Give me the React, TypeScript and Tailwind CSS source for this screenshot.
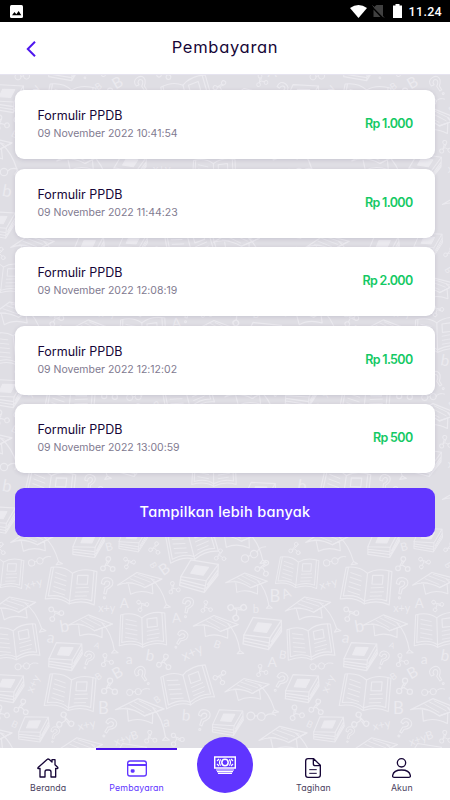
import React from 'react';

type Payment = {
  title: string;
  date: string;
  amount: string;
};

const payments: Payment[] = [
  { title: 'Formulir PPDB', date: '09 November 2022 10:41:54', amount: 'Rp 1.000' },
  { title: 'Formulir PPDB', date: '09 November 2022 11:44:23', amount: 'Rp 1.000' },
  { title: 'Formulir PPDB', date: '09 November 2022 12:08:19', amount: 'Rp 2.000' },
  { title: 'Formulir PPDB', date: '09 November 2022 12:12:02', amount: 'Rp 1.500' },
  { title: 'Formulir PPDB', date: '09 November 2022 13:00:59', amount: 'Rp 500' },
];

// Doodle positions inside one 885x885 tile: x, y, rotation, scale
type Spot = [number, number, number, number];

const openBooks: Spot[] = [
  [215, 168, 7, 1], [428, 300, -1, 0.96], [572, 35, -14, 1], [560, 472, -14, 1],
  [212, 488, 7, 1], [8, 128, 7, 0.84], [45, 338, -6, 0.95], [150, 760, 9, 1], [642, 705, 0, 0.9],
];
const caps: Spot[] = [
  [98, 30, -3, 0.95], [420, 158, -3, 0.97], [40, 232, -6, 1], [271, 286, 3, 0.97],
  [648, 288, 3, 0.97], [420, 540, 4, 1.05], [740, 158, 3, 0.9], [742, 476, -5, 0.97],
  [240, 655, -3, 1], [850, 622, -4, 1.05], [710, 18, 0, 1], [505, 790, 0, 0.9],
];
const closedBooks: Spot[] = [
  [266, 43, -2, 0.95], [400, 30, 0, 0.85], [598, 139, 6, 1.1], [197, 380, 0, 1], [22, 476, 0, 1],
  [102, 598, -2, 0.92], [788, 311, 3, 1.12], [684, 578, 0, 0.92], [390, 683, 6, 0.95],
  [780, 782, 0, 0.95], [0, 855, 0, 0.95],
];
const questions: Spot[] = [
  [320, 172, 5, 1], [563, 230, 5, 0.95], [543, 327, 25, 0.9], [265, 388, 15, 0.85], [428, 435, -40, 0.95],
  [610, 568, 12, 1], [328, 592, 25, 0.95], [164, 612, 10, 0.75], [842, 455, 25, 0.95], [270, 745, 0, 0.9],
];
const glasses: Spot[] = [
  [118, 92, -8, 0.85], [78, 407, 0, 0.85], [413, 484, 0, 0.85], [760, 72, -20, 1], [782, 558, 8, 1.05], [10, 695, 0, 1],
];
const molecules: Spot[] = [
  [323, 103, 0, 1], [388, 97, 80, 0.8], [465, 53, 15, 0.8], [520, 173, -20, 0.8], [428, 225, 75, 0.8],
  [618, 230, -10, 0.8], [168, 250, 80, 1], [318, 390, -20, 0.85], [493, 395, 10, 1], [328, 470, 0, 1.1],
  [65, 530, 10, 1], [198, 573, 110, 1.1], [450, 621, -10, 0.85], [532, 628, 85, 0.9], [2, 548, -20, 1],
  [662, 440, 30, 0.9], [790, 112, 25, 1], [713, 240, 60, 1.2], [0, 55, 10, 0.8], [783, 421, -20, 0.8],
  [660, 75, 0, 0.8], [300, 775, 0, 0.9], [560, 835, 60, 1],
];
const letters: [string, number, number, number, number][] = [
  ['x+y', 103, 172, -15, 34], ['x+y', 320, 246, 0, 32], ['x+y', 582, 380, -25, 42], ['x+y', 262, 596, -12, 34],
  ['x+y', 110, 466, -65, 34], ['x+yB', 382, 636, -20, 34], ['A', 373, 233, 0, 40], ['A', 530, 277, -5, 40],
  ['A', 288, 354, 20, 24], ['A', 863, 203, -20, 40], ['B', 825, 215, 0, 50], ['A', 817, 410, 0, 42],
  ['B', 846, 386, 10, 34], ['B', 502, 130, -35, 46], ['B', 360, 442, -30, 46], ['B', 310, 552, 0, 50],
  ['B', 301, 447, -35, 28], ['B', 452, 110, 60, 26], ['B', 477, 517, -35, 28], ['B', 648, 354, 20, 32],
  ['B', 40, 592, 25, 28], ['B', 330, 62, -15, 34], ['a', 150, 338, 10, 46], ['b', 196, 305, -10, 50],
  ['a', 388, 402, 0, 42], ['b', 448, 392, 10, 46], ['a', 500, 590, -5, 42], ['b', 557, 572, 5, 46],
  ['b', 768, 248, 0, 34], ['b', 18, 770, 10, 50], ['x+y', 485, 700, 0, 34],
];

const place = ([x, y, r, s]: Spot) => `translate(${x} ${y}) rotate(${r}) scale(${s})`;

const SchoolDoodles: React.FC = () => (
  <svg className="absolute inset-0 h-full w-full" fill="none" aria-hidden="true">
    <defs>
      <g id="open-book">
        <path d="M-68-48-74 48Q-30 36-1 54Q38 36 74 48L70-52Q26-60-2-38Q-30-58-68-48Z" />
        <path d="M-2-38-1 54M-61-49-66 38Q-26 28-1 46Q34 29 65 37L61-53" />
        <path d="M-52-34-20-27M-52-20-18-13M-53-6-18 1M-53 8-18 15M-54 22-18 29M14 4 50-2M14 17 52 11M14 29 48 24" strokeWidth="2.6" />
        <path d="M14-34 45-38 46-11 15-8Z" />
      </g>
      <g id="cap">
        <path d="M-70 4-8-32 68-8 14 16Q-28-10-70 4Z" />
        <path d="M-36 3-31 34Q0 20 38 36L37 7M14 16 68-8" />
        <path d="M-42-3-22 0M-30-14 12 6M-18-22 32 0M-4-26 46-6" strokeWidth="2.4" />
        <path d="M36-9Q66 18 78 72L70 82 90 80 78 72" />
      </g>
      <g id="closed-book">
        <path d="M-28-42 48-38 20 10-50 6Z" />
        <path d="M-50 6-51 30 18 42 20 10M18 42 50-8 48-38M-49 14 19 24M-50 22 18 33M24 20 48-22M22 30 49-14" />
        <path d="M-14-28 22-27 10-4-24-6Z" className="fill-[#ebeaef]" />
      </g>
      <g id="question">
        <path d="M-17-10Q-18-31 3-29Q22-25 16-7Q10 2 2 6L0 20-7 19-5 1Q8-4 8-13Q7-20-1-19Q-8-17-8-8Z" />
        <circle cx="-4" cy="32" r="3" />
      </g>
      <g id="glasses">
        <circle cx="-28" cy="4" r="11" />
        <circle cx="2" cy="1" r="11" />
        <path d="M-17 2-9 1M13-2Q24-14 42-8" />
      </g>
      <g id="molecule">
        <circle cx="2" cy="-16" r="7" />
        <circle cx="-14" cy="12" r="7" />
        <circle cx="15" cy="14" r="7" />
        <path d="M-1-9-9 6-1 2 9 9M5-9 0-2" />
      </g>
      <g id="tile" className="stroke-[#ebeaef]" strokeWidth="3.4" strokeLinejoin="round" strokeLinecap="round">
        {openBooks.map((s, i) => <use key={i} href="#open-book" transform={place(s)} />)}
        {caps.map((s, i) => <use key={i} href="#cap" transform={place(s)} />)}
        {closedBooks.map((s, i) => <use key={i} href="#closed-book" transform={place(s)} />)}
        {questions.map((s, i) => <use key={i} href="#question" transform={place(s)} />)}
        {glasses.map((s, i) => <use key={i} href="#glasses" transform={place(s)} />)}
        {molecules.map((s, i) => <use key={i} href="#molecule" transform={place(s)} />)}
        {letters.map(([t, x, y, r, size], i) => (
          <text
            key={i}
            transform={`translate(${x} ${y}) rotate(${r})`}
            fontSize={size}
            textAnchor="middle"
            stroke="none"
            className="fill-[#ebeaef] font-['Lato',sans-serif]"
          >
            {t}
          </text>
        ))}
      </g>
    </defs>
    {[-135, 160, 455].map((y) =>
      [-295, 0, 295].map((x) => (
        <use key={`${x}${y}`} href="#tile" transform={`translate(${x} ${y}) scale(0.33333)`} />
      ))
    )}
  </svg>
);

const StatusBar: React.FC = () => (
  <div className="flex h-[22px] shrink-0 items-center bg-black pl-2.5 pr-2">
    <svg className="h-[13px] w-[13px]" viewBox="0 0 13 13">
      <rect width="13" height="13" rx="1.5" fill="#fff" />
      <path d="M2 10.3 4.5 7l1.8 2.2L8.7 6l2.6 4.3z" fill="#000" />
    </svg>
    <svg className="ml-auto h-[13px] w-[17px]" viewBox="0 0 17 13">
      <path d="M0 3Q8.5-3 17 3L8.5 13Z" fill="#fff" />
    </svg>
    <svg className="ml-[5px] h-[14px] w-[13px]" viewBox="0 0 13 14">
      <path d="M4.5 1H11V13L1.5 3.5ZM1.5 5.5 8.5 13H1.5Z" fill="#404040" />
      <path d="M.5 1.5 12 13.5" stroke="#404040" />
    </svg>
    <svg className="ml-2 h-[14px] w-[9px]" viewBox="0 0 9 14">
      <path d="M2.5 0h4v1.5H9V14H0V1.5h2.5z" fill="#fff" />
    </svg>
    <span className="ml-[7px] mt-0.5 font-['Roboto',sans-serif] text-[12.5px] font-medium leading-none tracking-[0.3px] text-white">
      11.24
    </span>
  </div>
);

const HomeIcon = () => (
  <svg className="h-5 w-[22px]" viewBox="0 0 66 60" fill="none" stroke="currentColor" strokeWidth="4" strokeLinejoin="round" strokeLinecap="round">
    <path d="M9 31 4 32Q1 31 4 28L31 4Q33 2 36 4L45 12V5H54V20L62 28Q64 31 61 32L56 31V57H42V42Q42 36 36 36H29Q24 36 24 42V57H9Z" />
  </svg>
);

const CardIcon = () => (
  <svg className="h-[17px] w-5" viewBox="0 0 60 51" fill="none" stroke="currentColor" strokeWidth="4">
    <rect x="2" y="3" width="56" height="45" rx="7" />
    <path d="M2 15H58" strokeWidth="6" />
    <rect x="13" y="30" width="8" height="6" rx="2" fill="currentColor" />
  </svg>
);

const BillIcon = () => (
  <svg className="h-5 w-4" viewBox="0 0 48 60" fill="none" stroke="currentColor" strokeWidth="4" strokeLinejoin="round" strokeLinecap="round">
    <path d="M9 2H26L46 22V51Q46 58 39 58H9Q2 58 2 51V9Q2 2 9 2ZM25 3V17Q25 23 31 23H45" />
    <path d="M14 35H34M14 46H34" strokeWidth="3" />
  </svg>
);

const UserIcon = () => (
  <svg className="h-5 w-[19px]" viewBox="0 0 57 60" fill="none" stroke="currentColor" strokeWidth="4" strokeLinejoin="round">
    <circle cx="28.5" cy="14.5" r="12.5" />
    <path d="M2 52Q5 36 28.5 36T55 52Q56 58 50 58H7Q1 58 2 52Z" />
  </svg>
);

const MoneyIcon = () => (
  <svg className="h-[18px] w-[22px]" viewBox="0 0 66 54" fill="none" stroke="currentColor" strokeWidth="4.5">
    <rect x="2" y="3" width="62" height="33" />
    <circle cx="33" cy="19.5" r="9.5" />
    <path d="M9 15 15 9M51 9 57 15M9 24 15 30M51 30 57 24M20 10Q13 19.5 20 29M46 10Q53 19.5 46 29" strokeWidth="3.5" />
    <path d="M6 42H60M9 47H57M12 52H54" strokeWidth="3.5" />
  </svg>
);

const PaymentCard: React.FC<{ payment: Payment }> = ({ payment }) => (
  <div className="flex h-[69px] items-center justify-between rounded-[9px] bg-white px-[22.5px] shadow-[0_1px_4px_rgba(60,50,90,0.14)]">
    <div>
      <p className="text-[12.5px] leading-[18px] tracking-[-0.02px] text-[#160637]">{payment.title}</p>
      <p className="text-[10.5px] leading-[17px] tracking-[-0.01px] text-[#817a90]">{payment.date}</p>
    </div>
    <p className="text-[12.5px] font-semibold tracking-[-0.66px] text-[#14c964]">{payment.amount}</p>
  </div>
);

const NavItem: React.FC<{ label: string; active?: boolean; children: React.ReactNode }> = ({ label, active, children }) => (
  <button className={`flex flex-1 flex-col items-center ${active ? 'text-[#6035ff]' : 'text-[#160637]'}`}>
    <span className={`h-[2px] w-[81px] ${active ? 'bg-[#4a12e8]' : ''}`} />
    <span className="mt-2 flex h-5 items-center">{children}</span>
    <span className={`mt-[3px] text-[8.8px] leading-[13px] tracking-[0.14px] ${active ? '' : 'text-[#4b4260]'}`}>{label}</span>
  </button>
);

export default function App() {
  return (
    <div className="flex h-[800px] w-[450px] flex-col overflow-hidden bg-[#dfdee4] font-['Inter',sans-serif] [font-feature-settings:'cv11']">
      <StatusBar />
      <header className="flex h-[52px] shrink-0 items-center bg-white px-6 pt-px">
        <button className="w-6" aria-label="Kembali">
          <svg className="ml-[2px] h-4 w-[10px]" viewBox="0 0 10 16" fill="none" stroke="#4d16ee" strokeWidth="2">
            <path d="M9 .8 1.8 8 9 15.2" />
          </svg>
        </button>
        <h1 className="flex-1 pb-0.5 text-center text-[16.5px] tracking-[0.7px] text-[#160637]">Pembayaran</h1>
        <span className="w-6" />
      </header>

      <main className="relative flex-1 border-t border-[#e5e3ef]">
        <SchoolDoodles />
        <div className="relative flex flex-col gap-[9.5px] px-[15px] pt-[15px]">
          {payments.map((payment) => (
            <PaymentCard key={payment.date} payment={payment} />
          ))}
          <button className="mt-[5.5px] h-[48.5px] rounded-[9px] bg-[#6035ff] text-[14.5px] font-medium tracking-[0.28px] text-white">
            Tampilkan lebih banyak
          </button>
        </div>
      </main>

      <nav className="relative flex h-[52px] shrink-0 bg-white px-1">
        <NavItem label="Beranda"><HomeIcon /></NavItem>
        <NavItem label="Pembayaran" active><CardIcon /></NavItem>
        <div className="flex flex-1 justify-center">
          <button className="-mt-[11px] flex h-14 w-14 items-center justify-center rounded-full bg-[#6035ff] text-white" aria-label="Bayar">
            <MoneyIcon />
          </button>
        </div>
        <NavItem label="Tagihan"><BillIcon /></NavItem>
        <NavItem label="Akun"><UserIcon /></NavItem>
      </nav>
    </div>
  );
}
